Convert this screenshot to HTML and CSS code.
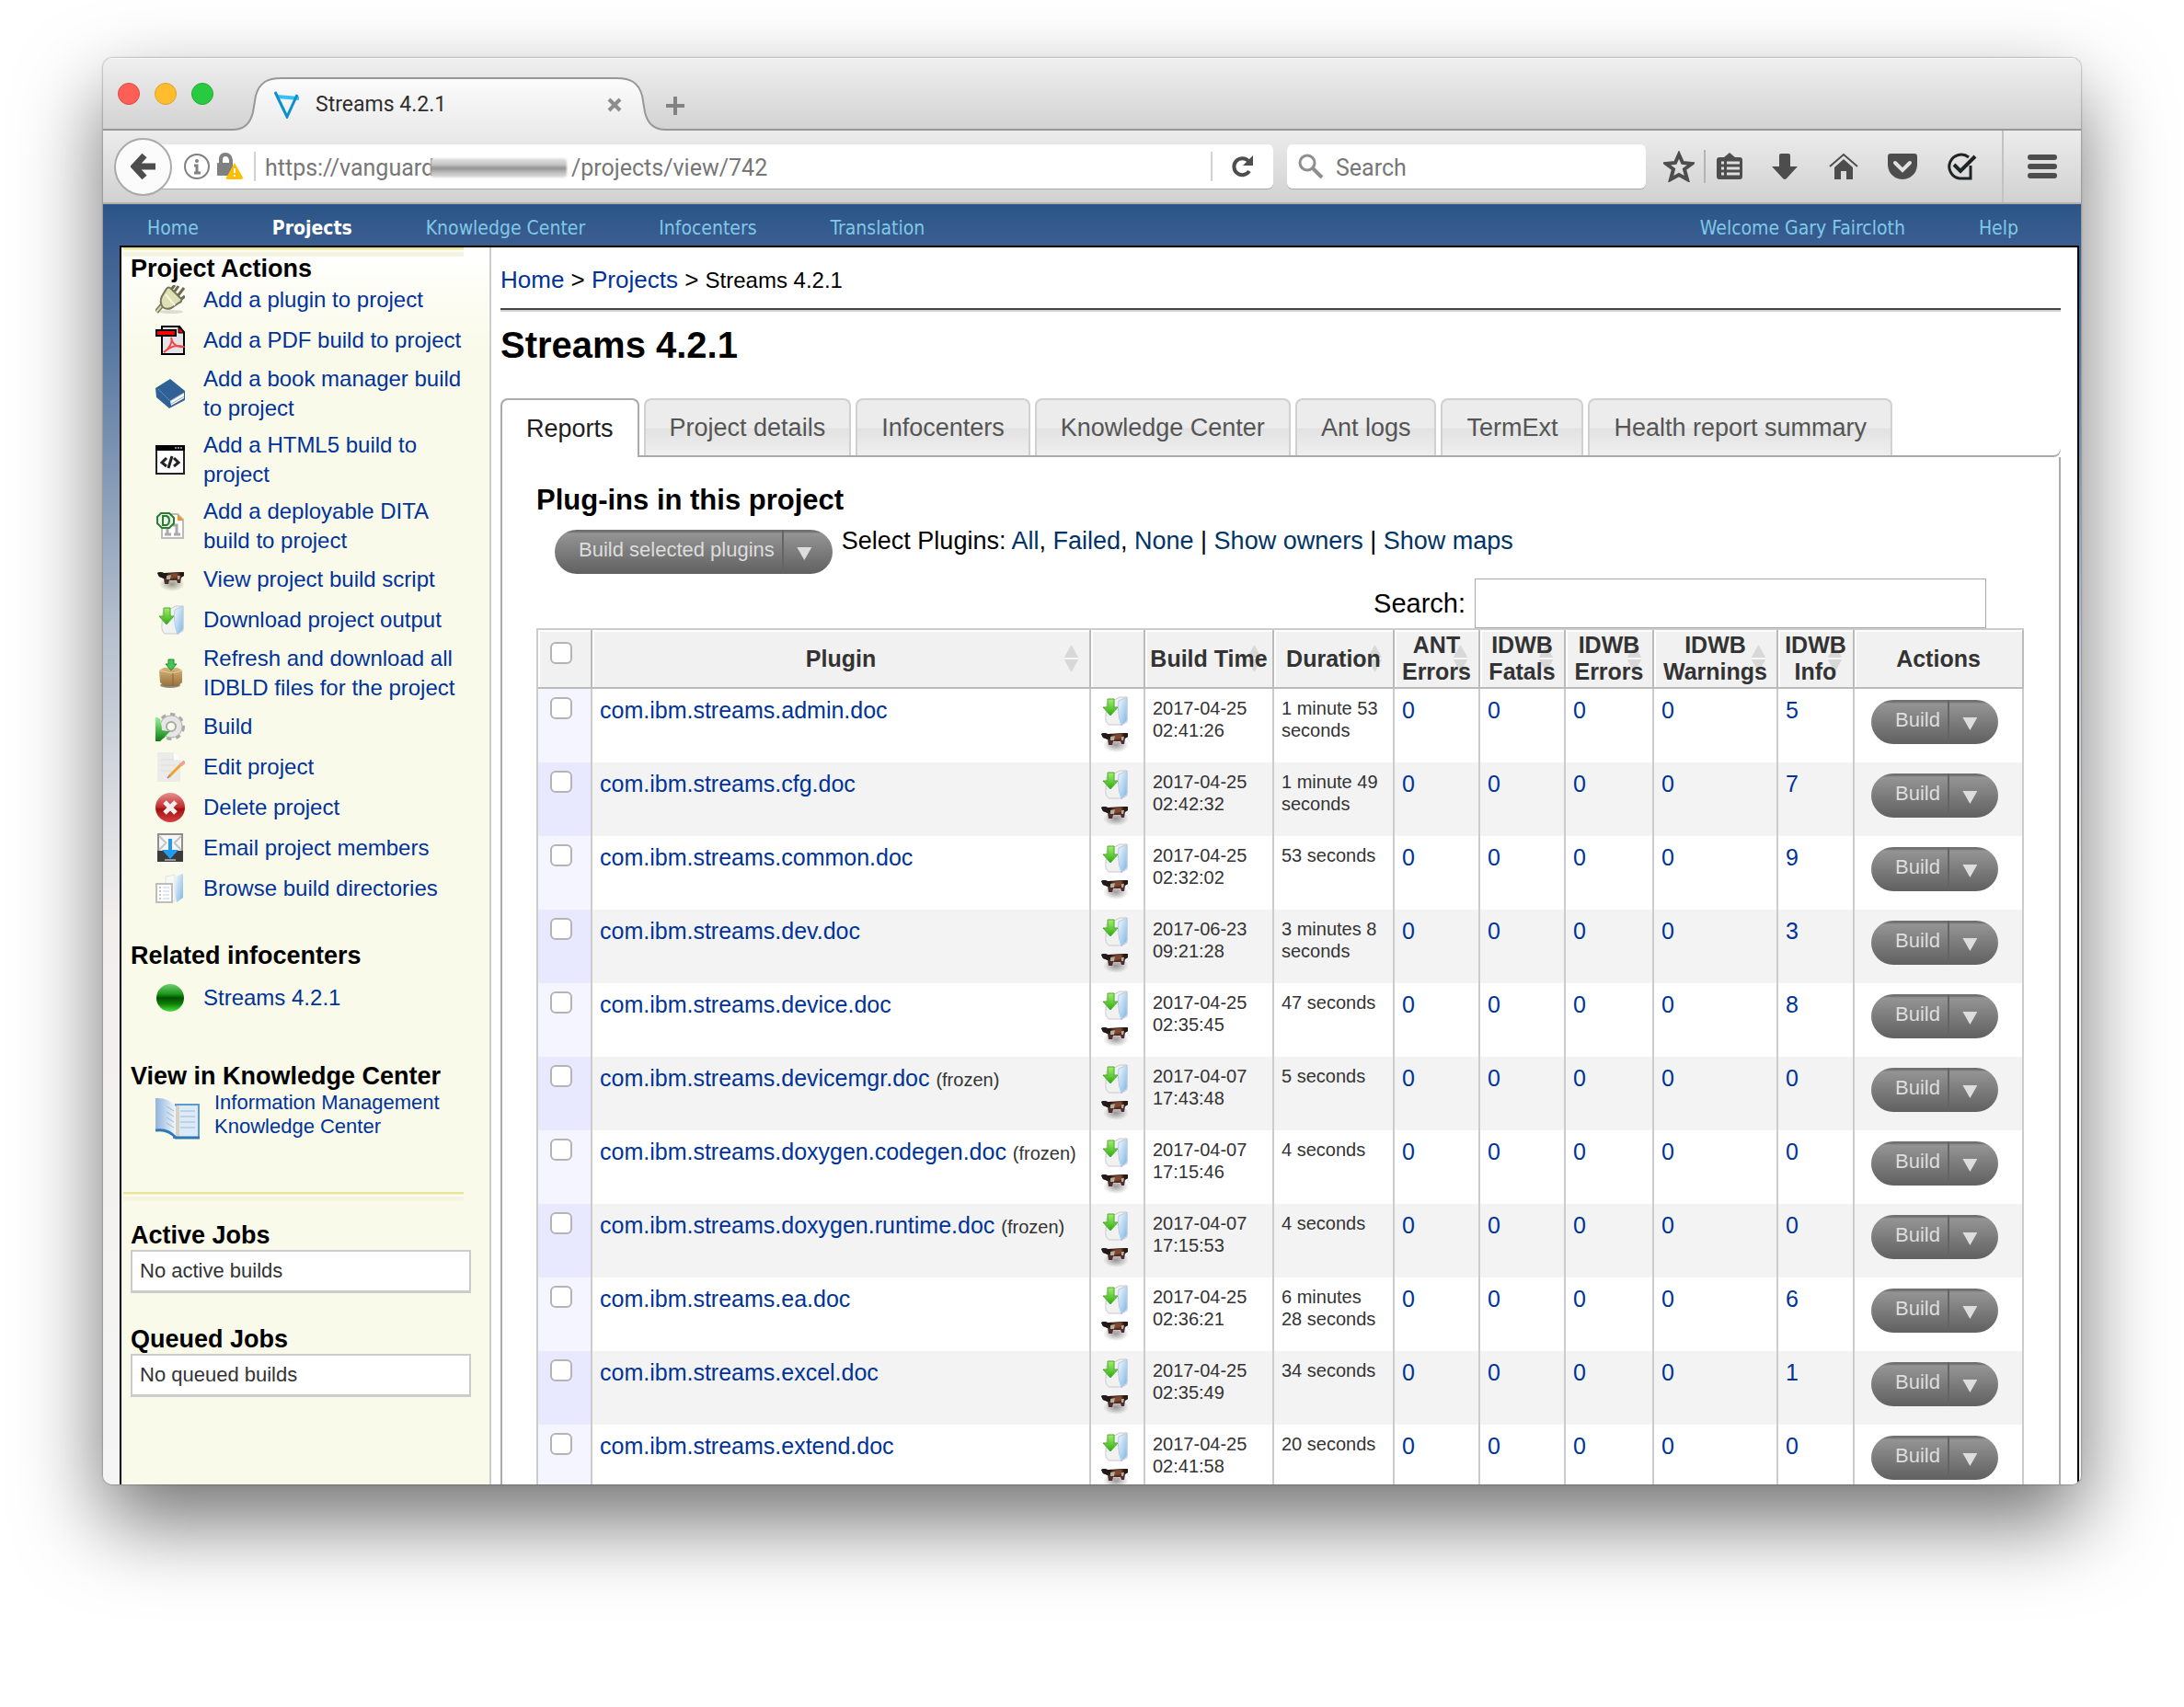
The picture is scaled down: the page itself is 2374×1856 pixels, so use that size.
FILE: index.html
```html
<!DOCTYPE html>
<html lang="en">
<head>
<meta charset="utf-8">
<title>Streams 4.2.1</title>
<link rel="stylesheet" href="styles.css">
</head>
<body>
<svg class="defs" aria-hidden="true">
  <defs>
    <linearGradient id="g-tab" x1="0" y1="0" x2="0" y2="1"><stop offset="0" stop-color="#fcfcfc"/><stop offset="1" stop-color="#ebebeb"/></linearGradient>
    <linearGradient id="g-blue" x1="0" y1="0" x2="1" y2="1"><stop offset="0" stop-color="#f4faff"/><stop offset="1" stop-color="#7db4e4"/></linearGradient>
    <linearGradient id="g-red" x1="0" y1="0" x2="0" y2="1"><stop offset="0" stop-color="#e89090"/><stop offset=".5" stop-color="#c02a2a"/><stop offset=".55" stop-color="#a01010"/><stop offset="1" stop-color="#d84040"/></linearGradient>
    <linearGradient id="g-green" x1="0" y1="0" x2="0" y2="1"><stop offset="0" stop-color="#6fce6f"/><stop offset=".35" stop-color="#1f9a1c"/><stop offset=".5" stop-color="#045000"/><stop offset=".7" stop-color="#0b7a06"/><stop offset="1" stop-color="#4be03c"/></linearGradient>
    <linearGradient id="g-box" x1="0" y1="0" x2="0" y2="1"><stop offset="0" stop-color="#d9b67c"/><stop offset="1" stop-color="#96703a"/></linearGradient>
    <linearGradient id="g-arrow" x1="0" y1="0" x2="0" y2="1"><stop offset="0" stop-color="#a5ee6a"/><stop offset="1" stop-color="#2eaa10"/></linearGradient>
    <linearGradient id="g-leaf" x1="0" y1="0" x2="0" y2="1"><stop offset="0" stop-color="#8af08a"/><stop offset="1" stop-color="#0c7a10"/></linearGradient>
    <linearGradient id="g-page" x1="0" y1="0" x2="1" y2="0"><stop offset="0" stop-color="#8fb4dc"/><stop offset="1" stop-color="#f2f7fc"/></linearGradient>
    <radialGradient id="g-shade"><stop offset="0" stop-color="#000" stop-opacity=".4"/><stop offset="1" stop-color="#000" stop-opacity="0"/></radialGradient>
  </defs>
  <symbol id="i-plug" viewBox="0 0 32 32">
    <ellipse cx="17" cy="29" rx="13" ry="2" fill="#000" opacity=".12"/>
    <path d="M1 29 L7 22" stroke="#77775a" stroke-width="5"/><path d="M1 29 L8 21" stroke="#d6d6ae" stroke-width="2"/>
    <path d="M16 6 L21 0 M25 1 L20 8 M31 3 L24 12 M32 12 L27 16" stroke="#6c6c50" stroke-width="3"/>
    <path d="M7 12 L12 4 Q14 1 17 4 L28 15 Q29 18 26 19 L17 25 Q12 27 8 24 Q4 19 7 12Z" fill="#dfe1b4" stroke="#75765a" stroke-width="2"/>
    <path d="M11 10 L21 22" stroke="#f6f7de" stroke-width="2"/>
  </symbol>
  <symbol id="i-pdf" viewBox="0 0 32 32">
    <path d="M7 1H26L31 7V31H7Z" fill="#e4e4e8" stroke="#000" stroke-width="2"/>
    <path d="M25 1V8H31Z" fill="#f00" stroke="#000" stroke-width="1"/>
    <rect x="1" y="5" width="21" height="6" fill="#f00" stroke="#000" stroke-width="2"/>
    <path d="M9 29 C15 25 19 18 17 13 C18 20 24 24 30 23 C22 20 14 24 9 29" fill="none" stroke="#f04848" stroke-width="2"/>
  </symbol>
  <symbol id="i-book" viewBox="0 0 32 32">
    <path d="M0 10 L16 0 L32 13 V23 L15 32 L1 20Z" fill="#2f6196"/>
    <path d="M16 24 L31 15 V21 L17 29Z" fill="#fff"/><path d="M16 24 L31 15 M17 27 L31 19" stroke="#9ab" fill="none"/>
    <path d="M3 11 L16 24" stroke="#79a0c8" stroke-dasharray="2 1"/>
  </symbol>
  <symbol id="i-html" viewBox="0 0 32 32">
    <rect x="1" y="1" width="30" height="30" fill="#fff" stroke="#222" stroke-width="2"/>
    <rect width="32" height="6" fill="#000"/><path d="M21 3H30" stroke="#888" stroke-width="2" stroke-dasharray="2 1"/>
    <path d="M12 14 L7 19 L12 23 M20 14 L25 19 L20 23 M18 12 L14 25" fill="none" stroke="#222" stroke-width="3"/>
  </symbol>
  <symbol id="i-dita" viewBox="0 0 32 32">
    <path d="M7 3H24L30 9V29H7Z" fill="#fff" stroke="#bbb" stroke-width="2"/>
    <path d="M24 3V10H30Z" fill="#f79226"/>
    <path d="M13 24V17 M10 25H17 M19 15H23V24 M20 25H27" stroke="#aaa" stroke-width="3" fill="none"/>
    <path d="M6 2H15L20 7V13L15 18H7L2 13V6Z" fill="#e9f4e9" stroke="#2d7a33" stroke-width="2"/>
    <path d="M8 5H12Q15 6 15 10Q15 14 12 15H8Z" fill="none" stroke="#2d7a33" stroke-width="2"/>
  </symbol>
  <symbol id="i-cow" viewBox="0 0 32 32">
    <ellipse cx="18" cy="21" rx="14" ry="8" fill="url(#g-shade)"/>
    <path d="M2 9 Q5 7 9 9 L24 8 L31 8 L31 12 L28 14 L27 20 H24 L23 17 L15 17 L14 21 H10 L9 15 L4 13Z" fill="#4a3028"/>
    <path d="M2 9 Q5 7 9 9 L14 9 L12 14 L9 15 L4 13Z M26 8 H31 L31 12 L27 14Z" fill="#221a18"/>
    <path d="M17 10 L24 9 L24 14 L16 15Z" fill="#85472a"/>
    <path d="M12 12 L17 11 L16 16 L12 16Z M24 12 L27 12 L26 16 L24 16Z M15 18 H22 V20 H15Z" fill="#b9aaa0"/>
  </symbol>
  <symbol id="i-download" viewBox="0 0 32 32">
    <path d="M8 8 L22 1 H30 V28 L24 31 H10 Q6 28 7 20Z" fill="#f1f1f1" stroke="#c9c9c9"/>
    <path d="M21 5 L30 1 V26 L24 32 Q19 18 21 5Z" fill="url(#g-blue)" stroke="#b4cde4"/>
    <path d="M9 3H16V12H20L12 21L4 12H9Z" fill="url(#g-arrow)" stroke="#4cab28"/>
  </symbol>
  <symbol id="i-box" viewBox="0 0 32 32">
    <ellipse cx="16" cy="29" rx="11" ry="3" fill="#000" opacity=".45"/>
    <path d="M4 13 L9 10 H24 L29 13 V26 L24 30 H10 L5 26Z" fill="url(#g-box)"/><path d="M4 13 L19 16 L29 13" stroke="#e8cc98" fill="none"/><path d="M19 16V30" stroke="#866232"/>
    <path d="M14 1H20V6H23L17 13L11 6H14Z" fill="#44c552" stroke="#23893a"/>
  </symbol>
  <symbol id="i-gear" viewBox="0 0 32 32">
    <path d="M0 6 C5 6 7 9 6 16 H14 L10 28 L0 32Z" fill="url(#g-leaf)"/>
    <circle cx="17" cy="16" r="13" fill="#e3e3e3" stroke="#a9a9a9" stroke-width="4" stroke-dasharray="5 5"/>
    <circle cx="17" cy="16" r="12" fill="#e6e6e6" stroke="#b4b4b4"/><circle cx="17" cy="16" r="5" fill="#fbfbe9" stroke="#a9a9a9" stroke-width="2"/>
    <path d="M0 8 Q7 8 7 20 L13 21 H16 L5 32 L0 32Z" fill="url(#g-leaf)"/>
  </symbol>
  <symbol id="i-edit" viewBox="0 0 32 32">
    <path d="M2 0H20L27 8V32H2Z" fill="#ebebe8"/><path d="M20 0V8H27Z" fill="#fff"/>
    <path d="M6 8H20 M6 14H22 M6 20H18" stroke="#dddddc"/>
    <path d="M15 26 L28 13" stroke="#eda32c" stroke-width="3"/><path d="M27 14 L32 10" stroke="#ef9f9f" stroke-width="4"/><path d="M13 28 L16 25" stroke="#b88" stroke-width="2"/>
  </symbol>
  <symbol id="i-delete" viewBox="0 0 32 32">
    <circle cx="16" cy="16" r="16" fill="url(#g-red)"/>
    <path d="M10 10 L22 22 M22 10 L10 22" stroke="#f4eeee" stroke-width="5"/>
  </symbol>
  <symbol id="i-mail" viewBox="0 0 32 32">
    <rect x="3" y="1" width="26" height="26" fill="#f5f5f5" stroke="#8e8e8e" stroke-width="2"/>
    <path d="M4 3 L12 11 M28 3 L20 11 M4 18 L11 11 M28 18 L21 11" stroke="#c4c4c4" stroke-width="2"/>
    <path d="M2 19H30V31H2Z" fill="#3b3b3b"/><path d="M10 29H22" stroke="#999" stroke-width="2"/>
    <path d="M14 6H18V18H25L16 28L7 18H14Z" fill="#1f9cf0"/>
  </symbol>
  <symbol id="i-browse" viewBox="0 0 32 32">
    <path d="M11 3 L21 1 V30 H11Z" fill="#f8f8f6" stroke="#e2e2e2"/>
    <path d="M22 3 L30 0 V26 L23 31 Q20 16 22 3Z" fill="url(#g-blue)"/>
    <rect x="1" y="11" width="17" height="20" fill="#fff" stroke="#bdbdbd" stroke-width="2"/>
    <path d="M4 15H6 M4 19H6 M4 23H6 M4 27H6" stroke="#888"/><path d="M8 15H15 M8 19H15 M8 23H15 M8 27H15" stroke="#bcd0ea"/>
  </symbol>
  <symbol id="i-ball" viewBox="0 0 32 32">
    <ellipse cx="16" cy="16" rx="15" ry="15" fill="url(#g-green)"/>
  </symbol>
  <symbol id="i-openbook" viewBox="0 0 48 48">
    <path d="M22 8 H47 V44 H20Z" fill="#dcebf8" stroke="#5b9bce" stroke-width="2"/>
    <path d="M0 1 Q14 0 22 10 V45 Q14 34 0 36Z" fill="url(#g-page)"/>
    <path d="M22 10 Q24 8 26 10 V43 H22Z" fill="#d9d2c2"/>
    <path d="M0 36 Q14 34 22 44 H48" fill="none" stroke="#2f78b6" stroke-width="3"/>
    <path d="M12 10 L20 15 M12 16 L20 21 M12 22 L20 27 M12 28 L20 33 M27 15H43 M27 21H43 M27 27H43 M27 33H43" stroke="#9fb8d4"/>
  </symbol>
</svg>

<div class="window">
  <header class="tabstrip">
    <div class="lights"><span class="light red"></span><span class="light yellow"></span><span class="light green"></span></div>
    <div class="browser-tab">
      <svg class="tab-shape" width="472" height="58" viewBox="0 0 472 58" aria-hidden="true"><path d="M0 58 V57 C14 57 20 50 23 38 L26 20 C30 6 38 1 54 1 H418 C434 1 442 6 446 20 L449 38 C452 50 458 57 472 57 V58Z" fill="url(#g-tab)"/><path d="M0 57 C14 57 20 50 23 38 L26 20 C30 6 38 1 54 1 H418 C434 1 442 6 446 20 L449 38 C452 50 458 57 472 57" fill="none" stroke="#979797" stroke-width="2"/></svg>
      <svg class="favicon" width="28" height="30" viewBox="0 0 28 30" aria-hidden="true"><path d="M3 6 L27 8" stroke="#38bdf5" stroke-width="4"/><path d="M1 1 L14 28 L25 4" fill="none" stroke="#0a8fd0" stroke-width="3"/></svg>
      <span class="tab-title">Streams 4.2.1</span>
      <button class="tab-close" aria-label="Close tab"><svg width="16" height="16" viewBox="0 0 16 16"><path d="M2 2 L14 14 M14 2 L2 14" stroke="#8d8d8d" stroke-width="4"/></svg></button>
    </div>
    <button class="new-tab" aria-label="New tab"><svg width="20" height="20" viewBox="0 0 20 20"><path d="M10 0V20 M0 10H20" stroke="#828282" stroke-width="4"/></svg></button>
  </header>

  <div class="toolbar">
    <button class="back" aria-label="Back"><svg width="28" height="30" viewBox="0 0 28 30"><path d="M15 3 L4 15 L15 27 M5 15 H27" fill="none" stroke="#4d4d4d" stroke-width="7"/></svg></button>
    <div class="address">
      <svg width="28" height="28" viewBox="0 0 28 28" aria-hidden="true"><circle cx="14" cy="14" r="13" fill="none" stroke="#808080" stroke-width="2"/><circle cx="14" cy="8" r="2" fill="#808080"/><path d="M11 13H14V21 M11 21H18" stroke="#808080" stroke-width="3" fill="none"/></svg>
      <svg class="lock" width="28" height="30" viewBox="0 0 28 30" aria-hidden="true"><path d="M4 12V8Q4 2 9 2Q14 2 15 8V12" fill="none" stroke="#808080" stroke-width="4"/><rect x="0" y="11" width="17" height="14" rx="1" fill="#808080"/><path d="M19 11 L28 27 Q28 29 26 29 H11 Q9 29 10 27Z" fill="#ffbf00"/><path d="M19 17V22 M19 24V26" stroke="#fff" stroke-width="2"/></svg>
      <span class="divider"></span>
      <input class="url" type="text" aria-label="Address" value="https://vanguard                        /projects/view/742">
      <span class="redaction"></span>
      <span class="divider"></span>
      <button class="reload" aria-label="Reload"><svg width="24" height="26" viewBox="0 0 24 26"><path d="M19 18 A9 9 0 1 1 18 7" fill="none" stroke="#4d4d4d" stroke-width="4"/><path d="M23 1V12H12Z" fill="#4d4d4d"/></svg></button>
    </div>
    <div class="web-search">
      <svg width="30" height="30" viewBox="0 0 30 30" aria-hidden="true"><circle cx="11" cy="11" r="8" fill="none" stroke="#8f8f8f" stroke-width="3"/><path d="M17 17 L27 27" stroke="#8f8f8f" stroke-width="4"/></svg>
      <input type="text" aria-label="Search the web" placeholder="Search">
    </div>
    <div class="tools">
      <button aria-label="Bookmark"><svg width="34" height="34" viewBox="0 0 34 34"><path d="M17 4 L21 13 L31 14 L23 20 L26 31 L17 26 L8 31 L11 20 L3 14 L13 13Z" fill="none" stroke="#4d4d4d" stroke-width="4"/></svg></button>
      <span class="divider dark"></span>
      <button aria-label="Bookmarks list"><svg width="34" height="34" viewBox="0 0 34 34"><path d="M17 2 L23 7 H28 Q31 7 31 10 V28 Q31 31 28 31 H6 Q3 31 3 28 V10 Q3 7 6 7 H11Z" fill="#4d4d4d"/><path d="M8 13H11 M8 19H11 M8 25H11 M14 13H28 M14 19H28 M14 25H28" stroke="#dedede" stroke-width="3"/></svg></button>
      <button class="near" aria-label="Downloads"><svg width="34" height="34" viewBox="0 0 34 34"><path d="M13 3H21Q23 3 23 5V17H31L19 30Q17 32 15 30L3 17H11V5Q11 3 13 3Z" fill="#4d4d4d"/></svg></button>
      <button aria-label="Home page"><svg width="34" height="34" viewBox="0 0 34 34"><path d="M2 17 L17 4 L32 17" fill="none" stroke="#4d4d4d" stroke-width="2"/><path d="M7 18 L17 9 L27 18V31H20V22H14V31H7Z" fill="#4d4d4d"/></svg></button>
      <button aria-label="Pocket"><svg width="34" height="34" viewBox="0 0 34 34"><path d="M4 3H30Q33 3 33 6V15Q33 24 25 29Q17 33 9 29Q1 24 1 15V6Q1 3 4 3Z" fill="#4d4d4d"/><path d="M9 13 L17 21 L25 13" fill="none" stroke="#e2e2e2" stroke-width="4" stroke-linecap="round"/></svg></button>
      <button aria-label="Check"><svg width="34" height="34" viewBox="0 0 34 34"><path d="M25 7 A13 13 0 1 0 15 30 H27 V16" fill="none" stroke="#1e2424" stroke-width="3"/><path d="M9 15 L16 22 L32 6" fill="none" stroke="#1e2424" stroke-width="4"/></svg></button>
    </div>
    <button class="menu" aria-label="Menu"><svg width="32" height="28" viewBox="0 0 32 28"><path d="M3 4H29 M3 14H29 M3 24H29" stroke="#4d4d4d" stroke-width="6" stroke-linecap="round"/></svg></button>
  </div>

  <div class="page">
    <nav class="topnav">
      <a href="#">Home</a><a href="#" class="current">Projects</a><a href="#">Knowledge Center</a><a href="#">Infocenters</a><a href="#">Translation</a>
      <a href="#" class="push">Welcome Gary Faircloth</a><a href="#">Help</a>
    </nav>
    <div class="frame">
      <aside class="sidebar">
        <div class="rule"></div>
        <h3>Project Actions</h3>
        <ul class="actions">
          <li><svg class="ico"><use href="#i-plug"/></svg><a href="#">Add a plugin to project</a></li>
          <li><svg class="ico"><use href="#i-pdf"/></svg><a href="#">Add a PDF build to project</a></li>
          <li><svg class="ico"><use href="#i-book"/></svg><a href="#">Add a book manager build to project</a></li>
          <li><svg class="ico"><use href="#i-html"/></svg><a href="#">Add a HTML5 build to project</a></li>
          <li><svg class="ico"><use href="#i-dita"/></svg><a href="#">Add a deployable DITA build to project</a></li>
          <li><svg class="ico"><use href="#i-cow"/></svg><a href="#">View project build script</a></li>
          <li><svg class="ico"><use href="#i-download"/></svg><a href="#">Download project output</a></li>
          <li><svg class="ico"><use href="#i-box"/></svg><a href="#">Refresh and download all IDBLD files for the project</a></li>
          <li><svg class="ico"><use href="#i-gear"/></svg><a href="#">Build</a></li>
          <li><svg class="ico"><use href="#i-edit"/></svg><a href="#">Edit project</a></li>
          <li><svg class="ico"><use href="#i-delete"/></svg><a href="#">Delete project</a></li>
          <li><svg class="ico"><use href="#i-mail"/></svg><a href="#">Email project members</a></li>
          <li><svg class="ico"><use href="#i-browse"/></svg><a href="#">Browse build directories</a></li>
        </ul>
        <h3 class="related">Related infocenters</h3>
        <ul class="actions">
          <li><svg class="ico"><use href="#i-ball"/></svg><a href="#">Streams 4.2.1</a></li>
        </ul>
        <h3 class="view-kc">View in Knowledge Center</h3>
        <div class="kc"><svg width="48" height="48"><use href="#i-openbook"/></svg><a href="#">Information Management Knowledge Center</a></div>
        <div class="rule lower"></div>
        <h3 class="jobs">Active Jobs</h3>
        <div class="job-box">No active builds</div>
        <h3 class="jobs">Queued Jobs</h3>
        <div class="job-box">No queued builds</div>
      </aside>

      <main class="main">
        <div class="crumbs"><a href="#">Home</a> &gt; <a href="#">Projects</a> &gt; <span>Streams 4.2.1</span></div>
        <hr>
        <h1>Streams 4.2.1</h1>
        <div class="tabs" role="tablist">
          <button role="tab" class="active" aria-selected="true">Reports</button>
          <button role="tab">Project details</button>
          <button role="tab">Infocenters</button>
          <button role="tab">Knowledge Center</button>
          <button role="tab">Ant logs</button>
          <button role="tab">TermExt</button>
          <button role="tab">Health report summary</button>
        </div>
        <section class="panel">
          <h2>Plug-ins in this project</h2>
          <div class="controls">
            <div class="split"><button>Build selected plugins</button><button aria-label="More build options"><i></i></button></div>
            <p>Select Plugins: <a href="#">All</a>, <a href="#">Failed</a>, <a href="#">None</a> | <a href="#">Show owners</a> | <a href="#">Show maps</a></p>
          </div>
          <div class="filter"><label for="filter">Search:</label><input id="filter" type="text"></div>
          <table>
            <colgroup><col class="c-check"><col><col class="c-icons"><col class="c-time"><col class="c-dur"><col class="c-err"><col class="c-err"><col class="c-idwb"><col class="c-warn"><col class="c-info"><col class="c-act"></colgroup>
            <thead>
              <tr><th class="check"><input type="checkbox" aria-label="Select all"></th><th class="sort"><span>Plugin</span></th><th></th><th class="sort"><span>Build Time</span></th><th class="sort"><span>Duration</span></th><th class="sort"><span>ANT<br>Errors</span></th><th class="sort"><span>IDWB<br>Fatals</span></th><th class="sort"><span>IDWB<br>Errors</span></th><th class="sort"><span>IDWB<br>Warnings</span></th><th class="sort"><span>IDWB<br>Info</span></th><th>Actions</th></tr>
            </thead>
            <tbody>
              <tr><td class="check"><input type="checkbox" aria-label="Select admin"></td><td class="name"><a href="#">com.ibm.streams.admin.doc</a></td><td class="icons"><svg class="ico"><use href="#i-download"/></svg><svg class="ico cow"><use href="#i-cow"/></svg></td><td class="small">2017-04-25 02:41:26</td><td class="small">1 minute 53 seconds</td><td><a href="#">0</a></td><td><a href="#">0</a></td><td><a href="#">0</a></td><td><a href="#">0</a></td><td><a href="#">5</a></td><td class="act"><div class="split"><button>Build</button><button aria-label="More"><i></i></button></div></td></tr>
              <tr><td class="check"><input type="checkbox" aria-label="Select cfg"></td><td class="name"><a href="#">com.ibm.streams.cfg.doc</a></td><td class="icons"><svg class="ico"><use href="#i-download"/></svg><svg class="ico cow"><use href="#i-cow"/></svg></td><td class="small">2017-04-25 02:42:32</td><td class="small">1 minute 49 seconds</td><td><a href="#">0</a></td><td><a href="#">0</a></td><td><a href="#">0</a></td><td><a href="#">0</a></td><td><a href="#">7</a></td><td class="act"><div class="split"><button>Build</button><button aria-label="More"><i></i></button></div></td></tr>
              <tr><td class="check"><input type="checkbox" aria-label="Select common"></td><td class="name"><a href="#">com.ibm.streams.common.doc</a></td><td class="icons"><svg class="ico"><use href="#i-download"/></svg><svg class="ico cow"><use href="#i-cow"/></svg></td><td class="small">2017-04-25 02:32:02</td><td class="small">53 seconds</td><td><a href="#">0</a></td><td><a href="#">0</a></td><td><a href="#">0</a></td><td><a href="#">0</a></td><td><a href="#">9</a></td><td class="act"><div class="split"><button>Build</button><button aria-label="More"><i></i></button></div></td></tr>
              <tr><td class="check"><input type="checkbox" aria-label="Select dev"></td><td class="name"><a href="#">com.ibm.streams.dev.doc</a></td><td class="icons"><svg class="ico"><use href="#i-download"/></svg><svg class="ico cow"><use href="#i-cow"/></svg></td><td class="small">2017-06-23 09:21:28</td><td class="small">3 minutes 8 seconds</td><td><a href="#">0</a></td><td><a href="#">0</a></td><td><a href="#">0</a></td><td><a href="#">0</a></td><td><a href="#">3</a></td><td class="act"><div class="split"><button>Build</button><button aria-label="More"><i></i></button></div></td></tr>
              <tr><td class="check"><input type="checkbox" aria-label="Select device"></td><td class="name"><a href="#">com.ibm.streams.device.doc</a></td><td class="icons"><svg class="ico"><use href="#i-download"/></svg><svg class="ico cow"><use href="#i-cow"/></svg></td><td class="small">2017-04-25 02:35:45</td><td class="small">47 seconds</td><td><a href="#">0</a></td><td><a href="#">0</a></td><td><a href="#">0</a></td><td><a href="#">0</a></td><td><a href="#">8</a></td><td class="act"><div class="split"><button>Build</button><button aria-label="More"><i></i></button></div></td></tr>
              <tr><td class="check"><input type="checkbox" aria-label="Select devicemgr"></td><td class="name"><a href="#">com.ibm.streams.devicemgr.doc</a> <small>(frozen)</small></td><td class="icons"><svg class="ico"><use href="#i-download"/></svg><svg class="ico cow"><use href="#i-cow"/></svg></td><td class="small">2017-04-07 17:43:48</td><td class="small">5 seconds</td><td><a href="#">0</a></td><td><a href="#">0</a></td><td><a href="#">0</a></td><td><a href="#">0</a></td><td><a href="#">0</a></td><td class="act"><div class="split"><button>Build</button><button aria-label="More"><i></i></button></div></td></tr>
              <tr><td class="check"><input type="checkbox" aria-label="Select doxygen.codegen"></td><td class="name"><a href="#">com.ibm.streams.doxygen.codegen.doc</a> <small>(frozen)</small></td><td class="icons"><svg class="ico"><use href="#i-download"/></svg><svg class="ico cow"><use href="#i-cow"/></svg></td><td class="small">2017-04-07 17:15:46</td><td class="small">4 seconds</td><td><a href="#">0</a></td><td><a href="#">0</a></td><td><a href="#">0</a></td><td><a href="#">0</a></td><td><a href="#">0</a></td><td class="act"><div class="split"><button>Build</button><button aria-label="More"><i></i></button></div></td></tr>
              <tr><td class="check"><input type="checkbox" aria-label="Select doxygen.runtime"></td><td class="name"><a href="#">com.ibm.streams.doxygen.runtime.doc</a> <small>(frozen)</small></td><td class="icons"><svg class="ico"><use href="#i-download"/></svg><svg class="ico cow"><use href="#i-cow"/></svg></td><td class="small">2017-04-07 17:15:53</td><td class="small">4 seconds</td><td><a href="#">0</a></td><td><a href="#">0</a></td><td><a href="#">0</a></td><td><a href="#">0</a></td><td><a href="#">0</a></td><td class="act"><div class="split"><button>Build</button><button aria-label="More"><i></i></button></div></td></tr>
              <tr><td class="check"><input type="checkbox" aria-label="Select ea"></td><td class="name"><a href="#">com.ibm.streams.ea.doc</a></td><td class="icons"><svg class="ico"><use href="#i-download"/></svg><svg class="ico cow"><use href="#i-cow"/></svg></td><td class="small">2017-04-25 02:36:21</td><td class="small">6 minutes 28 seconds</td><td><a href="#">0</a></td><td><a href="#">0</a></td><td><a href="#">0</a></td><td><a href="#">0</a></td><td><a href="#">6</a></td><td class="act"><div class="split"><button>Build</button><button aria-label="More"><i></i></button></div></td></tr>
              <tr><td class="check"><input type="checkbox" aria-label="Select excel"></td><td class="name"><a href="#">com.ibm.streams.excel.doc</a></td><td class="icons"><svg class="ico"><use href="#i-download"/></svg><svg class="ico cow"><use href="#i-cow"/></svg></td><td class="small">2017-04-25 02:35:49</td><td class="small">34 seconds</td><td><a href="#">0</a></td><td><a href="#">0</a></td><td><a href="#">0</a></td><td><a href="#">0</a></td><td><a href="#">1</a></td><td class="act"><div class="split"><button>Build</button><button aria-label="More"><i></i></button></div></td></tr>
              <tr><td class="check"><input type="checkbox" aria-label="Select extend"></td><td class="name"><a href="#">com.ibm.streams.extend.doc</a></td><td class="icons"><svg class="ico"><use href="#i-download"/></svg><svg class="ico cow"><use href="#i-cow"/></svg></td><td class="small">2017-04-25 02:41:58</td><td class="small">20 seconds</td><td><a href="#">0</a></td><td><a href="#">0</a></td><td><a href="#">0</a></td><td><a href="#">0</a></td><td><a href="#">0</a></td><td class="act"><div class="split"><button>Build</button><button aria-label="More"><i></i></button></div></td></tr>
            </tbody>
          </table>
        </section>
      </main>
    </div>
  </div>
</div>
</body>
</html>
```
FILE: styles.css
```css
* { box-sizing: border-box; }
body {
  margin: 0;
  height: 100vh;
  padding: 63px 112px 242px;
  background: #fff;
  overflow: hidden;
  font-family: "Liberation Sans", Arial, sans-serif;
  color: #000;
}
a { color: #039; text-decoration: none; }
h1, h2, h3, p, ul { margin: 0; padding: 0; }
button { font: inherit; border: 0; padding: 0; background: none; color: inherit; }
svg { display: block; flex: none; }
.defs { position: absolute; width: 0; height: 0; }
.ico { width: 32px; height: 32px; }

/* Browser window */
.window {
  display: flex;
  flex-direction: column;
  height: 100%;
  border-radius: 10px;
  overflow: hidden;
  background: #fff;
  box-shadow: 0 0 2px rgba(0,0,0,.6), 0 40px 90px rgba(0,0,0,.56);
}
.tabstrip {
  flex: none;
  display: flex;
  height: 79px;
  background: linear-gradient(#efefef, #d2d2d2);
  box-shadow: inset 0 -2px #979797, inset 0 1px #f8f8f8;
}
.lights { display: flex; gap: 16px; padding: 27px 20px 0 16px; }
.light { width: 24px; height: 24px; border-radius: 50%; }
.red { background: #ff5f57; border: 1px solid #e2463f; }
.yellow { background: #ffbd2e; border: 1px solid #e0a028; }
.green { background: #28ca42; border: 1px solid #1dad2b; }
.browser-tab {
  position: relative;
  display: flex;
  align-items: center;
  width: 472px;
  height: 58px;
  margin-top: 21px;
  padding: 2px 48px 0 46px;
  font: 23px/30px Roboto, "Open Sans", sans-serif;
  color: #2e2e2e;
}
.browser-tab > * { position: relative; }
.browser-tab .tab-shape { position: absolute; left: 0; top: 0; }
.tab-title { flex: 1; margin-left: 17px; }
.new-tab { align-self: flex-start; margin: 42px 0 0; }

.toolbar {
  flex: none;
  display: flex;
  align-items: center;
  height: 80px;
  padding-left: 12px;
  background: linear-gradient(#ececec, #d1d1d1);
  border-bottom: 2px solid #b0b0b0;
}
.back {
  position: relative;
  z-index: 1;
  display: grid;
  place-items: center;
  width: 63px;
  height: 63px;
  margin-right: -32px;
  border: 2px solid #aaa;
  border-radius: 50%;
  background: #fbfbfb;
}
.address, .web-search {
  display: flex;
  align-items: center;
  height: 48px;
  background: #fff;
  border-radius: 6px;
  box-shadow: 0 1px #a8a8a8;
}
.address { position: relative; flex: 1; padding-left: 45px; }
.lock { margin: 0 12px 0 8px; }
.divider { width: 2px; height: 32px; background: #d2d2d2; }
.divider.dark { height: 36px; background: #b4b4b4; margin: 0 9px 0 10px; }
.toolbar input {
  min-width: 0;
  flex: 1;
  border: 0;
  padding: 3px 0 0;
  background: transparent;
  font: 25px/30px Roboto, "Open Sans", sans-serif;
  color: #777;
}
.toolbar input::placeholder { color: #777; opacity: 1; }
.toolbar .url { margin-left: 10px; }
.redaction {
  position: absolute;
  left: 313px;
  top: 15px;
  width: 148px;
  height: 21px;
  background: linear-gradient(#e4e4e4, #c4c4c4 35%, #8c8c8c 52%, #b4b4b4 68%, #e0e0e0);
  border-radius: 4px;
  filter: blur(1px);
}
.reload { width: 66px; display: grid; place-items: center; }
.web-search { width: 390px; margin-left: 15px; padding-left: 11px; gap: 12px; }
.tools { display: flex; align-items: center; padding: 0 27px 0 19px; }
.tools button + button { margin-left: 30px; }
.tools .near { margin-left: 26px; }
.tools button.near { margin-left: 26px; }
.menu { align-self: stretch; width: 86px; display: grid; place-items: center; border-left: 2px solid #c2c2c2; }

/* Site */
.page {
  flex: 1;
  min-height: 0;
  display: flex;
  flex-direction: column;
  background: linear-gradient(#2b5587, #3a5d90 40px, #54759f 140px, #b5bfce 460px, #f1eeec 780px, #f5f5f5);
}
.topnav {
  flex: none;
  display: flex;
  align-items: center;
  gap: 80px;
  height: 45px;
  padding: 7px 68px 0 48px;
  font: 21px/26px "DejaVu Sans Condensed", "DejaVu Sans", sans-serif;
}
.topnav a { color: #7fc9e8; }
.topnav .current { color: #fff; font-weight: bold; }
.topnav .push { margin-left: auto; }
.frame {
  flex: 1;
  min-height: 0;
  display: flex;
  margin: 0 2px 0 18px;
  border: 2px solid #000;
  border-bottom: 0;
  background: #fff;
  overflow: hidden;
}

.sidebar {
  flex: none;
  width: 402px;
  border-right: 2px solid #ccc;
  background: linear-gradient(#fff, #fafaea 110px);
}
.rule { height: 10px; margin: 0 28px 0 2px; background: linear-gradient(#e6e69a 2px, #fdfdf6 3px, #fdfdf6 4px, #f2f2de 6px, #f6f6e4); }
.rule.lower { margin-top: 55px; }
.sidebar h3 { margin: 1px 0 0 10px; font-size: 27px; line-height: 24px; }
.sidebar .related { margin: 39px 0 12px 10px; }
.sidebar .view-kc { margin-top: 51px; }
.sidebar .jobs { margin-top: 25px; }
.actions { list-style: none; }
.actions li {
  display: flex;
  align-items: center;
  gap: 20px;
  min-height: 44px;
  padding: 4px 20px 4px 37px;
  font-size: 24px;
  line-height: 32px;
}
.kc { display: flex; gap: 16px; padding: 4px 40px 0 37px; font-size: 22px; line-height: 26px; }
.kc svg { margin-top: 7px; }
.job-box {
  margin: 4px 20px 38px 10px;
  padding: 8px;
  border: 2px solid #ccc;
  border-bottom-width: 3px;
  background: #fff;
  font-size: 22px;
  line-height: 26px;
  color: #333;
}

.main { flex: 1; min-width: 0; padding: 20px 18px 0 10px; }
.crumbs { font-size: 26px; line-height: 30px; }
.crumbs span { font-size: 24px; }
hr { height: 4px; margin: 15px 0 14px; border: 0; background: linear-gradient(#444 2px, #d4d4d4 2px); }
h1 { font-size: 40px; line-height: 44px; }
.tabs { display: flex; gap: 5px; margin-top: 36px; box-shadow: inset 0 -2px #aaa; border-bottom-right-radius: 8px; }
.tabs button {
  height: 62px;
  margin-bottom: 2px;
  padding: 0 26px;
  border: 2px solid #d0d0d0;
  border-bottom: 0;
  border-radius: 8px 8px 0 0;
  background: linear-gradient(#ececec 50%, #e2e2e2 52%, #efefef);
  font-size: 27px;
  line-height: 30px;
  color: #555;
}
.tabs .active { height: 64px; margin-bottom: 0; border-color: #aaa; background: #fff; color: #212121; }
.panel { padding: 29px 38px 0 37px; border: 2px solid #aaa; border-width: 0 2px; }
h2 { font-size: 31px; line-height: 36px; }
.controls { display: flex; gap: 10px; padding: 11px 0 5px 20px; font-size: 27px; line-height: 30px; }
.controls a { color: #036; }
.controls .split { margin-top: 3px; }
.split {
  display: inline-flex;
  height: 48px;
  border-radius: 24px;
  overflow: hidden;
  background: linear-gradient(#707070 2px, #949494 4px, #606060);
  font-size: 22px;
  line-height: 24px;
  color: #ddd;
  text-shadow: 0 0 1px #ddd;
}
.split button { padding: 0 8px 4px 26px; }
.split button + button { width: 55px; padding: 4px 8px 0 0; border-left: 2px solid #646464; display: grid; place-items: center; }
.split i { width: 16px; height: 14px; background: #ddd; clip-path: polygon(0 0, 100% 0, 50% 100%); }
.filter { display: flex; justify-content: flex-end; gap: 10px; padding-right: 41px; font-size: 29px; line-height: 54px; }
.filter input { width: 556px; height: 54px; border: 1px solid #aaa; font: inherit; }

table {
  width: 100%;
  table-layout: fixed;
  border-collapse: separate;
  border-spacing: 0;
  border: 2px solid #ccc;
  border-width: 2px 0 0 2px;
}
.c-check, .c-icons { width: 59px; }
.c-time { width: 140px; }
.c-dur { width: 131px; }
.c-err { width: 93px; }
.c-idwb { width: 96px; }
.c-warn { width: 135px; }
.c-info { width: 83px; }
.c-act { width: 184px; }
th {
  position: relative;
  height: 64px;
  padding: 0;
  border-right: 2px solid #bbb;
  border-bottom: 2px solid #bbb;
  background: #f1f1f1;
  box-shadow: inset 2px 2px #fff;
  font-size: 25px;
  line-height: 29px;
  color: #333;
  white-space: nowrap;
}
th span { position: relative; z-index: 1; }
.sort::after {
  content: "";
  position: absolute;
  right: 12px;
  top: 16px;
  width: 15px;
  height: 30px;
  background: linear-gradient(#d8d8d8 14px, #f6f6f6 14px, #f6f6f6 16px, #d8d8d8 16px);
  clip-path: polygon(50% 0, 100% 45%, 100% 55%, 50% 100%, 0 55%, 0 45%);
}
td {
  height: 80px;
  padding: 9px 8px 0;
  border-right: 2px solid #ccc;
  vertical-align: top;
  font-size: 25px;
  line-height: 28px;
  color: #333;
}
tbody tr:nth-child(even) { background: #f3f3f3; }
td.check { background: #f5f5ff; }
tr:nth-child(even) td.check { background: #e8e8ff; }
.check { padding: 9px 0 0 13px; text-align: left; vertical-align: top; }
th.check { padding-top: 13px; }
.check input {
  appearance: none;
  display: block;
  width: 24px;
  height: 24px;
  margin: 0;
  border: 2px solid #b4b4b4;
  border-radius: 6px;
  background: #fff;
}
.name { white-space: nowrap; }
.name small { font-size: 20px; }
td.small { font-size: 20px; line-height: 24px; }
td.icons { padding: 8px 0 0; }
td.icons .ico { margin-left: 9px; }
td.act { padding: 12px 0 0 18px; line-height: 0; }
```
